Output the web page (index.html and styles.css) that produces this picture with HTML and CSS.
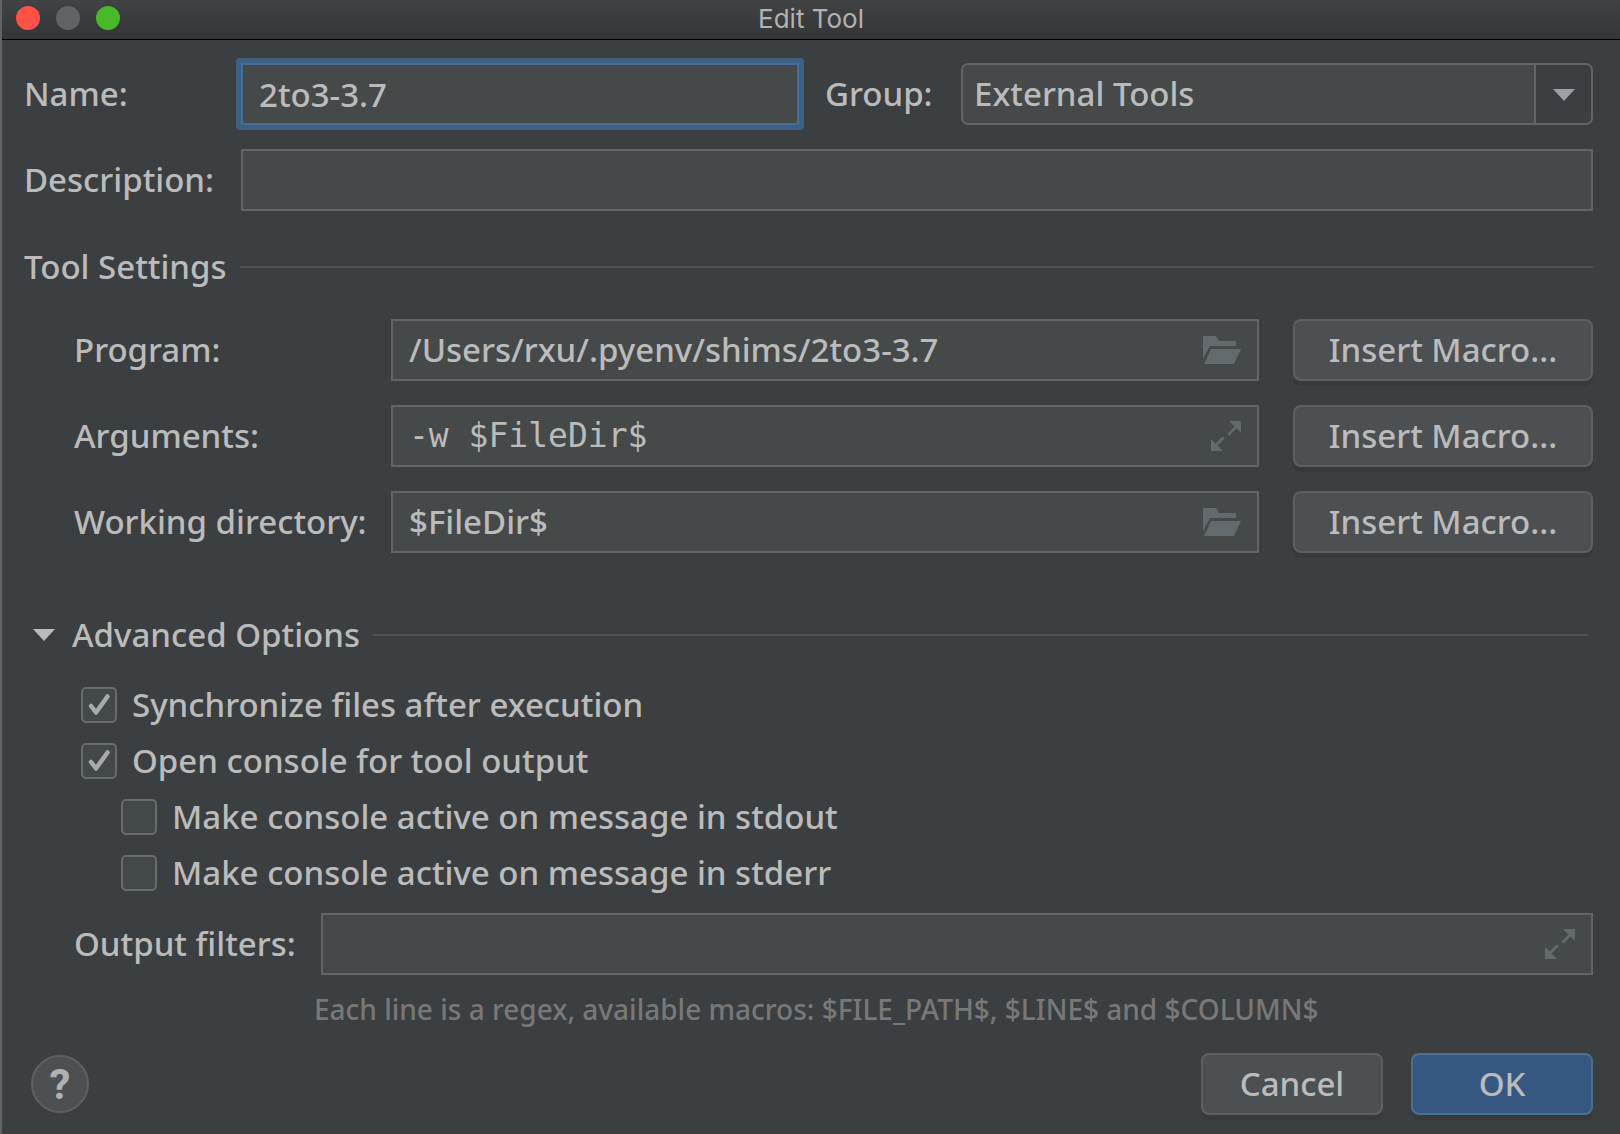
FILE: index.html
```html
<!DOCTYPE html>
<html lang="en">
<head>
<meta charset="utf-8">
<meta name="viewport" content="width=device-width, initial-scale=1">
<title>Edit Tool</title>
<link rel="stylesheet" href="styles.css">
</head>
<body>
<svg class="defs" aria-hidden="true">
  <symbol id="folder" viewBox="0 0 38 28"><path d="M0 0h13l3 5h17v5H7L0 23z"/><path d="M8 13h30l-7 15H1z"/></symbol>
  <symbol id="expand" viewBox="0 0 30 30"><path d="M18 0h12v12l-4.500-4.500-7 7-2-2 7-7zM0 18l4.500 4.500 7-7 2 2-7 7L12 30H0z"/></symbol>
  <symbol id="arrow" viewBox="0 0 22 12"><path d="M0 0h22L11 12z"/></symbol>
  <symbol id="tick" viewBox="0 0 36 36"><path d="M10 19l5 6.500L26.500 9.500" fill="none" stroke="currentColor" stroke-width="4.500" stroke-linecap="round" stroke-linejoin="round"/></symbol>
</svg>
<form class="window">
  <header class="titlebar">
    <div class="lights">
      <button type="button" class="light close" aria-label="Close"></button>
      <button type="button" class="light minimize" aria-label="Minimize" disabled></button>
      <button type="button" class="light maximize" aria-label="Maximize"></button>
    </div>
    <h1 class="title">Edit Tool</h1>
  </header>
  <main class="content">
    <div class="rows general">
      <label for="name">Name:</label>
      <div class="name-group">
        <input id="name" class="field focused" type="text" value="2to3-3.7">
        <label for="group">Group:</label>
        <div class="combo">
          <select id="group"><option>External Tools</option></select>
          <span class="combo-arrow"><svg class="arrow"><use href="#arrow"/></svg></span>
        </div>
      </div>
      <label for="description">Description:</label>
      <input id="description" class="field" type="text">
    </div>

    <h2 class="heading">Tool Settings</h2>
    <div class="rows settings">
      <label for="program">Program:</label>
      <div class="field with-icon">
        <input id="program" type="text" value="/Users/rxu/.pyenv/shims/2to3-3.7">
        <button type="button" class="icon-button" aria-label="Browse"><svg class="folder"><use href="#folder"/></svg></button>
      </div>
      <button type="button" class="button">Insert Macro...</button>
      <label for="arguments">Arguments:</label>
      <div class="field with-icon">
        <input id="arguments" class="mono" type="text" value="-w $FileDir$">
        <button type="button" class="icon-button" aria-label="Expand"><svg class="expand"><use href="#expand"/></svg></button>
      </div>
      <button type="button" class="button">Insert Macro...</button>
      <label for="directory">Working directory:</label>
      <div class="field with-icon">
        <input id="directory" type="text" value="$FileDir$">
        <button type="button" class="icon-button" aria-label="Browse"><svg class="folder"><use href="#folder"/></svg></button>
      </div>
      <button type="button" class="button">Insert Macro...</button>
    </div>

    <h2 class="heading advanced"><button type="button" class="disclosure" aria-expanded="true"><svg class="arrow"><use href="#arrow"/></svg>Advanced Options</button></h2>
    <div class="checks">
      <label class="check"><span class="box"><input type="checkbox" checked><svg class="tick"><use href="#tick"/></svg></span>Synchronize files after execution</label>
      <label class="check"><span class="box"><input type="checkbox" checked><svg class="tick"><use href="#tick"/></svg></span>Open console for tool output</label>
      <label class="check nested"><span class="box"><input type="checkbox"><svg class="tick"><use href="#tick"/></svg></span>Make console active on message in stdout</label>
      <label class="check nested"><span class="box"><input type="checkbox"><svg class="tick"><use href="#tick"/></svg></span>Make console active on message in stderr</label>
    </div>
    <div class="filters">
      <label for="filters">Output filters:</label>
      <div class="field with-icon">
        <input id="filters" type="text" aria-describedby="filters-hint">
        <button type="button" class="icon-button" aria-label="Expand"><svg class="expand"><use href="#expand"/></svg></button>
      </div>
    </div>
    <p id="filters-hint" class="hint">Each line is a regex, available macros: $FILE_PATH$, $LINE$ and $COLUMN$</p>
  </main>
  <footer class="footer">
    <button type="button" class="help" aria-label="Help">?</button>
    <div class="actions">
      <button type="button" class="button">Cancel</button>
      <button type="submit" class="button primary">OK</button>
    </div>
  </footer>
</form>
</body>
</html>
```
FILE: styles.css
```css
* {
  box-sizing: border-box;
}

body {
  margin: 0;
  background: #3c3f41;
  color: #bbbbbb;
  font: 500 33px/40px "Noto Sans", sans-serif;
}

input,
select,
button {
  margin: 0;
  padding: 0;
  border: 0;
  background: none;
  color: inherit;
  font: inherit;
  outline: 0;
}

svg {
  display: block;
  fill: currentColor;
}

.defs {
  display: none;
}

.window {
  display: flex;
  flex-direction: column;
  min-height: 100vh;
  border-left: 2px solid #616465;
  border-bottom: 1px solid #44393c;
}

/* Title bar */
.titlebar {
  display: grid;
  grid-template-columns: 1fr auto 1fr;
  align-items: center;
  height: 40px;
  padding: 0 14px 3px;
  background: linear-gradient(#414244, #343536);
  border-bottom: 1px solid #000;
}

.lights {
  display: flex;
  gap: 16px;
}

.light {
  width: 24px;
  height: 24px;
  border-radius: 50%;
}

.close { background: #ff5147; }
.minimize { background: #626365; }
.maximize { background: #48b928; }

.title {
  margin: 0;
  padding-top: 2px;
  color: #b2b2b3;
  font: 400 26px/32px Inter, sans-serif;
}

/* Form */
.content {
  padding: 23px 27px 0 22px;
}

.rows {
  display: grid;
  align-items: center;
  gap: 24px 0;
}

.general {
  grid-template-columns: 217px 1fr;
}

.settings {
  grid-template-columns: 317px 1fr 300px;
  padding-left: 50px;
}

.settings .field {
  margin-right: 34px;
}

.name-group {
  display: grid;
  grid-template-columns: 558fr 162px 632fr;
  align-items: center;
}

.name-group label {
  padding-left: 26px;
}

.field {
  width: 100%;
  min-width: 0;
  height: 62px;
  padding: 0 16px;
  background: #45494a;
  border: 2px solid #646464;
}

.settings .field,
.filters .field {
  width: auto;
}

.focused {
  border-color: #466d94;
  border-radius: 1px;
  box-shadow: 0 0 0 5px #3d6185;
}

.with-icon {
  display: flex;
  align-items: center;
}

.with-icon input {
  flex: 1;
  min-width: 0;
}

.mono {
  font-family: "DejaVu Sans Mono", monospace;
}

.icon-button {
  color: #626a6e;
}

.folder {
  width: 38px;
  height: 28px;
}

.expand {
  width: 30px;
  height: 30px;
}

.arrow {
  width: 22px;
  height: 12px;
}

.combo {
  display: flex;
  height: 62px;
  background: #45494a;
  border: 2px solid #646464;
  border-radius: 7px;
  overflow: hidden;
}

.combo select {
  flex: 1;
  min-width: 0;
  padding-left: 11px;
  appearance: none;
}

.combo-arrow {
  display: grid;
  place-items: center;
  width: 57px;
  padding-top: 2px;
  background: #3c3f41;
  border-left: 2px solid #646464;
  color: #9c9fa4;
}

.button {
  height: 62px;
  background: #4c5052;
  border: 2px solid #5e6060;
  border-radius: 8px;
  box-shadow: 0 5px 0 #37393a;
}

.primary {
  background: #365880;
  border-color: #4c708c;
}

.heading {
  display: flex;
  align-items: center;
  gap: 13px;
  height: 64px;
  margin: 24px 0 20px;
  font: inherit;
}

.heading::after {
  content: "";
  flex: 1;
  height: 2px;
  background: #515151;
}

.advanced {
  margin-top: 50px;
  padding: 0 5px 0 9px;
}

.disclosure {
  display: flex;
  align-items: center;
  gap: 17px;
}

.checks {
  display: grid;
  justify-items: start;
  gap: 20px;
  padding-left: 57px;
}

.check {
  display: flex;
  align-items: center;
  gap: 15px;
  height: 36px;
}

.nested {
  margin-left: 40px;
}

.box {
  display: grid;
}

.box input,
.tick {
  grid-area: 1 / 1;
  width: 36px;
  height: 36px;
}

.box input {
  appearance: none;
  background: #43494a;
  border: 2px solid #6b6b6b;
  border-radius: 5px;
}

.tick {
  color: #a9a9a9;
  visibility: hidden;
  pointer-events: none;
}

input:checked + .tick {
  visibility: visible;
}

.filters {
  display: grid;
  grid-template-columns: 247px 1fr;
  align-items: center;
  margin-top: 22px;
  padding-left: 50px;
}

.hint {
  margin: 14px 0 24px 290px;
  color: #787878;
  font-size: 28px;
}

.footer {
  display: flex;
  align-items: center;
  justify-content: space-between;
  margin-top: auto;
  padding: 0 27px 18px 29px;
}

.help {
  width: 58px;
  height: 58px;
  padding-top: 2px;
  background: #4c5052;
  border: 2px solid #5e6060;
  border-radius: 50%;
  color: #afb1b3;
  font: 700 42px/40px Roboto, sans-serif;
}

.actions {
  display: flex;
  gap: 28px;
}

.actions .button {
  width: 182px;
}
```
